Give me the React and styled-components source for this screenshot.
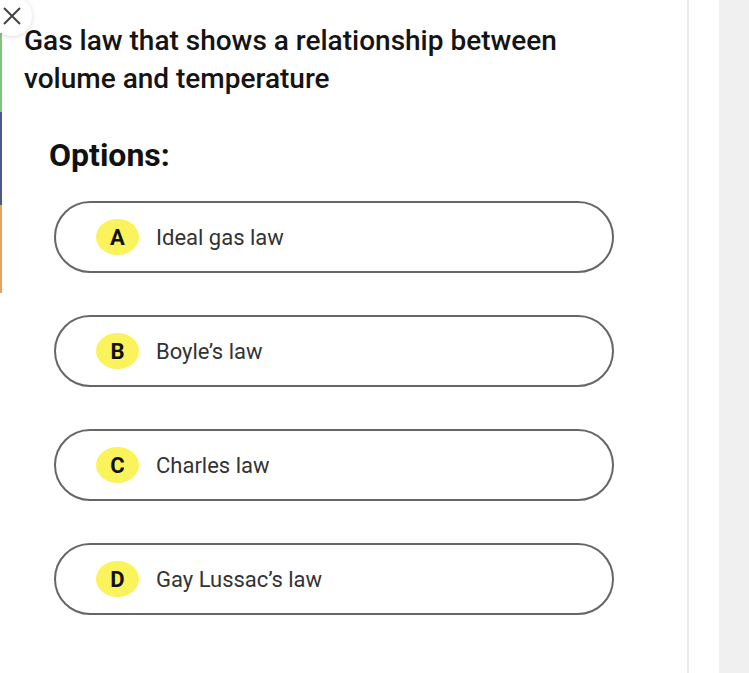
import React from 'react';
import styled, { createGlobalStyle } from 'styled-components';

const GlobalStyle = createGlobalStyle`
  html, body {
    margin: 0;
    padding: 0;
    background: #ffffff;
    font-family: Roboto, "Liberation Sans", Arial, sans-serif;
  }
`;

const Page = styled.div`
  display: flex;
  width: 749px;
  height: 673px;
  overflow: hidden;
`;

const Main = styled.div`
  position: relative;
  display: flex;
  width: 687px;
  flex-shrink: 0;
`;

const Divider = styled.div`
  width: 2px;
  background: #ececec;
  flex-shrink: 0;
`;

const Gutter = styled.div`
  width: 30px;
  background: #ffffff;
  flex-shrink: 0;
`;

const Sidebar = styled.div`
  flex: 1;
  background: #f0f0f0;
`;

const Edge = styled.div`
  display: flex;
  flex-direction: column;
  width: 2px;
  padding-top: 33px;
  flex-shrink: 0;
`;

const EdgeSegment = styled.div`
  height: ${p => p.h}px;
  background: ${p => p.color};
`;

const CloseButton = styled.button`
  position: absolute;
  left: -8px;
  top: -4px;
  width: 40px;
  height: 40px;
  border-radius: 50%;
  border: none;
  padding: 0;
  background: #ffffff;
  box-shadow: 0 1px 5px rgba(0, 0, 0, 0.14);
  display: flex;
  align-items: center;
  justify-content: center;
  cursor: pointer;
`;

const Content = styled.div`
  flex: 1;
  padding: 22px 0 0 22px;
`;

const Question = styled.h1`
  margin: 0;
  font-size: 28px;
  font-weight: 500;
  line-height: 38px;
  color: #141414;
  white-space: nowrap;
`;

const OptionsTitle = styled.h2`
  margin: 39px 0 0 25px;
  font-size: 32px;
  font-weight: 700;
  line-height: 36px;
  color: #111111;
`;

const OptionList = styled.div`
  display: flex;
  flex-direction: column;
  gap: 42px;
  margin: 28px 0 0 30px;
  width: 560px;
`;

const Option = styled.button`
  display: flex;
  align-items: center;
  gap: 17px;
  height: 72px;
  box-sizing: border-box;
  padding: 0 0 0 40px;
  border: 2px solid #666666;
  border-radius: 36px;
  background: #ffffff;
  font-family: inherit;
  cursor: pointer;
  text-align: left;
`;

const Badge = styled.span`
  display: flex;
  align-items: center;
  justify-content: center;
  width: 43px;
  height: 36px;
  border-radius: 50%;
  background: #fbf35c;
  font-size: 22px;
  font-weight: 700;
  color: #111111;
`;

const OptionText = styled.span`
  font-size: 22px;
  font-weight: 400;
  color: #333333;
`;

const options = [
  { key: 'A', label: 'Ideal gas law' },
  { key: 'B', label: 'Boyle’s law' },
  { key: 'C', label: 'Charles law' },
  { key: 'D', label: 'Gay Lussac’s law' },
];

export default function App() {
  return (
    <Page>
      <GlobalStyle />
      <Main>
        <CloseButton aria-label="Close">
          <svg width="20" height="20" viewBox="0 0 20 20">
            <path d="M2 2 L18 18 M18 2 L2 18" stroke="#444" strokeWidth="2" fill="none" />
          </svg>
        </CloseButton>
        <Edge>
          <EdgeSegment h={79} color="#7fc47a" />
          <EdgeSegment h={93} color="#4b5a8c" />
          <EdgeSegment h={88} color="#e8a15c" />
        </Edge>
        <Content>
          <Question>
            Gas law that shows a relationship between
            <br />
            volume and temperature
          </Question>
          <OptionsTitle>Options:</OptionsTitle>
          <OptionList>
            {options.map(o => (
              <Option key={o.key}>
                <Badge>{o.key}</Badge>
                <OptionText>{o.label}</OptionText>
              </Option>
            ))}
          </OptionList>
        </Content>
      </Main>
      <Divider />
      <Gutter />
      <Sidebar />
    </Page>
  );
}
